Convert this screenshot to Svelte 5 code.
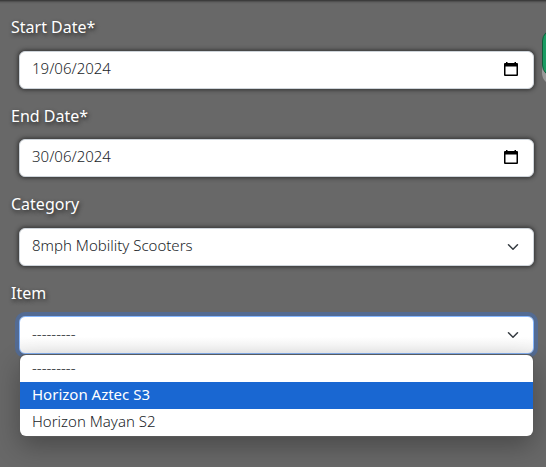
<script>
  const dates = [
    { id: 'start', label: 'Start Date*', value: '19/06/2024' },
    { id: 'end', label: 'End Date*', value: '30/06/2024' }
  ];
  const items = ['---------', 'Horizon Aztec S3', 'Horizon Mayan S2'];
  let highlighted = $state(1);
  let item = $state(items[0]);
</script>

<main>
  <form>
    {#each dates as date}
      <div class="field">
        <label for={date.id}>{date.label}</label>
        <div class="control">
          <input id={date.id} type="text" inputmode="numeric" value={date.value} />
          <button class="picker" type="button" aria-label="Open calendar">
            <svg width="14" height="15" viewBox="0 0 14 15">
              <path fill="#000" fill-rule="evenodd" d="M2 0h1.500v1h7V0H12v1h1a1 1 0 0 1 1 1v11a1 1 0 0 1-1 1H1a1 1 0 0 1-1-1V2a1 1 0 0 1 1-1h1zM1.500 4.500v8h11v-8z" />
            </svg>
          </button>
        </div>
      </div>
    {/each}

    <div class="field">
      <label for="category">Category</label>
      <div class="control">
        <select id="category"><option>8mph Mobility Scooters</option></select>
        <svg class="chevron" viewBox="0 0 16 16"><path d="m2 5 6 6 6-6" /></svg>
      </div>
    </div>

    <div class="field">
      <label for="item">Item</label>
      <div class="control">
        <select id="item" class="active" bind:value={item}>
          {#each items as name}<option>{name}</option>{/each}
        </select>
        <svg class="chevron" viewBox="0 0 16 16"><path d="m2 5 6 6 6-6" /></svg>
        <div class="menu" role="listbox" aria-label="Item">
          {#each items as name, i}
            <button
              type="button"
              role="option"
              aria-selected={i === highlighted}
              class:highlighted={i === highlighted}
              onmouseenter={() => (highlighted = i)}
              onclick={() => (item = name)}>{name}</button>
          {/each}
        </div>
      </div>
    </div>
  </form>
  <button class="side" type="button" aria-label="Open panel"></button>
</main>

<style>
  :global(body) {
    margin: 0;
    background: #686868;
  }
  main {
    position: relative;
    box-sizing: border-box;
    min-height: 100vh;
    overflow: hidden;
    border-top: 1px solid #3c3c3c;
    box-shadow: inset 0 4px 2px -3px #484848;
    font-family: "Noto Sans", "Open Sans", sans-serif;
    font-size: 15px;
    font-weight: 300;
  }
  form {
    display: flex;
    flex-direction: column;
    gap: 15px;
    padding: 14px 12px 0 11px;
  }
  .field {
    display: flex;
    flex-direction: column;
    gap: 10px;
  }
  label {
    color: #fff;
    font-size: 16px;
    font-weight: 400;
    line-height: 1.6;
    text-shadow: 1px 2px 4px #222;
  }
  .control {
    position: relative;
    margin-left: 8px;
  }
  input,
  select {
    display: block;
    box-sizing: border-box;
    width: 100%;
    height: 38px;
    margin: 0;
    padding: 0 36px 4px 12px;
    border: 1px solid #ced4da;
    border-radius: 6px;
    outline: none;
    appearance: none;
    background: #fff;
    color: #212529;
    font: inherit;
    box-shadow: 0 0 4px 1px #303030;
  }
  select.active {
    border-color: #86b7fe;
    background: linear-gradient(#fff 55%, #f0f0f0);
    box-shadow: 0 0 0 4px #536b93;
  }
  .picker {
    position: absolute;
    top: 11px;
    right: 16px;
    display: flex;
    padding: 0;
    border: 0;
    background: none;
  }
  .chevron {
    position: absolute;
    top: 13px;
    right: 15px;
    width: 12px;
    height: 12px;
    fill: none;
    stroke: #343a40;
    stroke-width: 2;
    stroke-linecap: round;
    stroke-linejoin: round;
    pointer-events: none;
  }
  .menu {
    position: absolute;
    top: 39px;
    left: 1px;
    right: 1px;
    overflow: hidden;
    border-radius: 6px;
    background: #fff;
    box-shadow: 0 0 1px 1px #5a5a5a, 0 10px 26px rgba(0, 0, 0, 0.3);
  }
  .menu button {
    display: block;
    width: 100%;
    height: 27px;
    padding: 0 12px 4px;
    border: 0;
    background: none;
    color: #212529;
    font: inherit;
    text-align: left;
  }
  .menu .highlighted {
    background: #1967d2;
    color: #fff;
    font-weight: 400;
  }
  .side {
    position: absolute;
    top: 28px;
    right: -36px;
    width: 40px;
    height: 48px;
    border: 1px solid #145c3c;
    border-radius: 12px;
    background: #199b62;
    box-shadow: 0 8px 0 #999;
  }
</style>
